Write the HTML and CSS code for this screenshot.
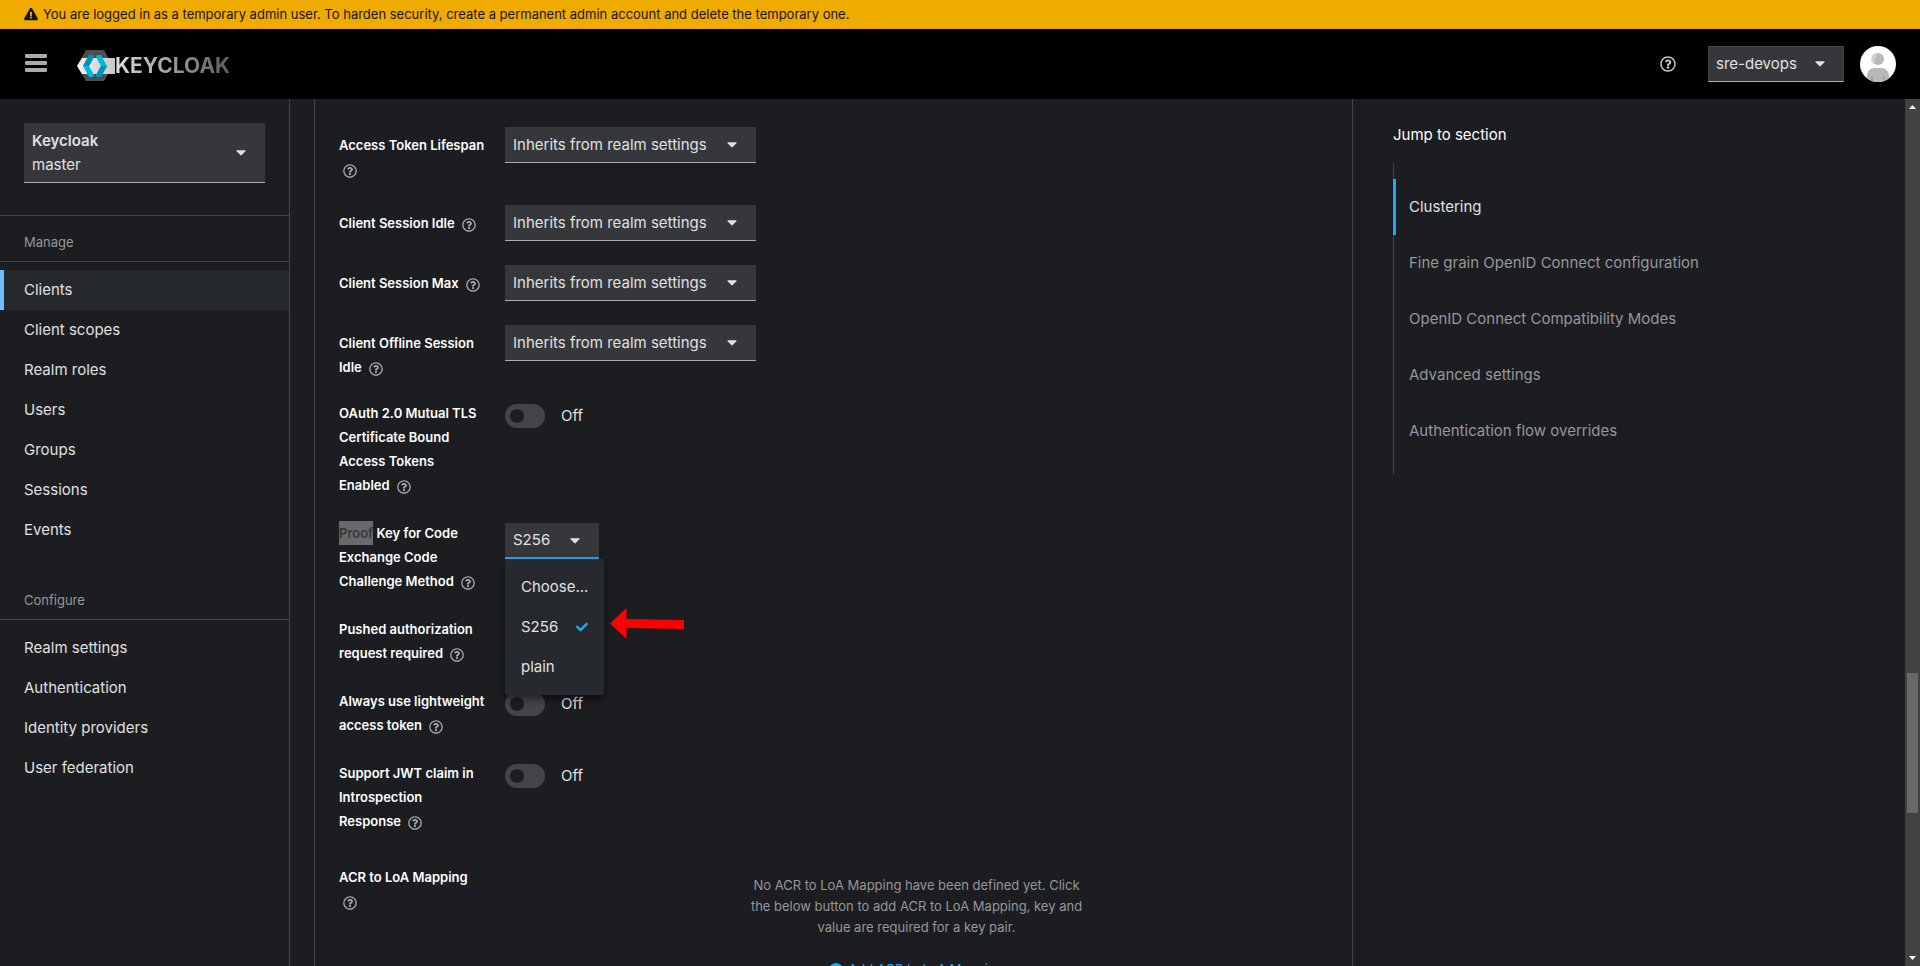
FILE: index.html
```
<!DOCTYPE html>
<html lang="en">
<head>
    <meta charset="UTF-8">
    <meta name="viewport" content="width=device-width, initial-scale=1.0">
    <title>Keycloak Administration Console</title>
    <link rel="stylesheet" href="styles.css">
</head>
<body>

<svg class="sprite" aria-hidden="true">
    <symbol id="caret" viewBox="0 24 320 512"><path d="M31.3 192h257.3c17.8 0 26.7 21.5 14.1 34.1L174.1 354.8c-7.8 7.8-20.5 7.8-28.3 0L17.2 226.1C4.6 213.5 13.5 192 31.3 192z"/></symbol>
    <symbol id="help" viewBox="0 0 512 512"><path d="M256 8C119.043 8 8 119.083 8 256c0 136.997 111.043 248 248 248s248-111.003 248-248C504 119.083 392.957 8 256 8zm0 448c-110.532 0-200-89.431-200-200 0-110.495 89.472-200 200-200 110.491 0 200 89.471 200 200 0 110.53-89.431 200-200 200zm107.244-255.2c0 67.052-72.421 68.084-72.421 92.863V300c0 6.627-5.373 12-12 12h-45.647c-6.627 0-12-5.373-12-12v-8.659c0-35.745 27.1-50.034 47.579-61.516 17.561-9.845 28.324-16.541 28.324-29.579 0-17.246-21.999-28.693-39.784-28.693-23.189 0-33.894 10.977-48.942 29.969-4.057 5.12-11.46 6.071-16.666 2.124l-27.824-21.098c-5.107-3.872-6.251-11.066-2.644-16.363C184.846 131.491 214.94 112 261.794 112c49.071 0 101.45 38.304 101.45 88.8zM298 368c0 23.159-18.841 42-42 42s-42-18.841-42-42 18.841-42 42-42 42 18.841 42 42z"/></symbol>
</svg>

<div class="banner">
    <svg class="banner-icon" viewBox="0 0 576 512"><path d="M569.517 440.013C587.975 472.007 564.806 512 527.94 512H48.054c-36.937 0-59.999-40.055-41.577-71.987L246.423 23.985c18.467-32.009 64.72-31.951 83.154 0l239.94 416.028zM288 354c-25.405 0-46 20.595-46 46s20.595 46 46 46 46-20.595 46-46-20.595-46-46-46zm-43.673-165.346l7.418 136c.347 6.364 5.609 11.346 11.982 11.346h48.546c6.373 0 11.635-4.982 11.982-11.346l7.418-136c.375-6.874-5.098-12.654-11.982-12.654h-63.383c-6.884 0-12.356 5.78-11.981 12.654z"/></svg>
    <span>You are logged in as a temporary admin user. To harden security, create a permanent admin account and delete the temporary one.</span>
</div>

<header class="masthead">
    <button class="nav-toggle" type="button" aria-label="Global navigation"><span></span><span></span><span></span></button>
    <a class="logo" href="#">
        <svg class="logo-mark" viewBox="0 0 38 32" aria-hidden="true">
            <defs>
                <linearGradient id="band"><stop offset="0" stop-color="#f2f2f2"/><stop offset="1" stop-color="#c8c8c8"/></linearGradient>
            </defs>
            <path fill="#4d4d4d" d="M9 0h18l9 16-9 15H9L0 16z"/>
            <path fill="url(#band)" d="M5 8h33v16H5L0 16z"/>
            <path fill="#00b8e3" d="M12 5h4l1 2-5 9 5 9-1 2h-4L6 16z"/>
            <path fill="#0093b8" d="M12 5h4l1 2-5 9H6z"/>
            <path fill="#00b8e3" d="M20 5h4l6 11-6 11h-4l-1-2 5-9-5-9z"/>
            <path fill="#0093b8" d="M24 16h6l-6 11h-4l-1-2z"/>
        </svg>
        <span class="logo-text">KEYCLOAK</span>
    </a>
    <div class="masthead-tools">
        <button class="icon-button" type="button" aria-label="Help"><svg><use href="#help"/></svg></button>
        <button class="user-menu" type="button"><span>sre-devops</span><svg class="caret"><use href="#caret"/></svg></button>
        <svg class="avatar" viewBox="0 0 36 36" role="img" aria-label="User avatar">
            <clipPath id="round"><circle cx="18" cy="18" r="18"/></clipPath>
            <g clip-path="url(#round)">
                <path fill="#fff" d="M0 0h36v36H0z"/>
                <circle cx="18" cy="13" r="6" fill="#b8b8b8"/>
                <path fill="#d0d0d0" d="M18 7a6 6 0 0 0-4 11c1-3 1-7 4-11z"/>
                <path fill="#b8b8b8" d="M7 36v-5c0-6 3-9 8-9h6c5 0 8 3 8 9v5z"/>
                <path fill="#a3a3a3" d="M11 36v-5l2-1v6zM23 36v-6l2 1v5z"/>
            </g>
        </svg>
    </div>
</header>

<div class="page">
    <nav class="sidebar">
        <div class="realm">
            <button class="realm-selector" type="button">
                <span class="realm-text"><b>Keycloak</b><span>master</span></span>
                <svg class="caret"><use href="#caret"/></svg>
            </button>
        </div>
        <section class="nav-group">
            <h2>Manage</h2>
            <ul>
                <li><a class="current" href="#">Clients</a></li>
                <li><a href="#">Client scopes</a></li>
                <li><a href="#">Realm roles</a></li>
                <li><a href="#">Users</a></li>
                <li><a href="#">Groups</a></li>
                <li><a href="#">Sessions</a></li>
                <li><a href="#">Events</a></li>
            </ul>
        </section>
        <section class="nav-group">
            <h2>Configure</h2>
            <ul>
                <li><a href="#">Realm settings</a></li>
                <li><a href="#">Authentication</a></li>
                <li><a href="#">Identity providers</a></li>
                <li><a href="#">User federation</a></li>
            </ul>
        </section>
    </nav>

    <main class="content">
        <form class="panel">
            <div class="field">
                <div class="field-label padded">
                    <label for="token-lifespan">Access Token Lifespan</label>
                    <button class="help" type="button" aria-label="Help"><svg><use href="#help"/></svg></button>
                </div>
                <div class="select">
                    <select id="token-lifespan"><option>Inherits from realm settings</option></select>
                    <svg class="caret"><use href="#caret"/></svg>
                </div>
            </div>
            <div class="field">
                <div class="field-label padded">
                    <label for="session-idle">Client Session Idle</label>
                    <button class="help" type="button" aria-label="Help"><svg><use href="#help"/></svg></button>
                </div>
                <div class="select">
                    <select id="session-idle"><option>Inherits from realm settings</option></select>
                    <svg class="caret"><use href="#caret"/></svg>
                </div>
            </div>
            <div class="field">
                <div class="field-label padded">
                    <label for="session-max">Client Session Max</label>
                    <button class="help" type="button" aria-label="Help"><svg><use href="#help"/></svg></button>
                </div>
                <div class="select">
                    <select id="session-max"><option>Inherits from realm settings</option></select>
                    <svg class="caret"><use href="#caret"/></svg>
                </div>
            </div>
            <div class="field">
                <div class="field-label padded">
                    <label for="offline-idle">Client Offline Session Idle</label>
                    <button class="help" type="button" aria-label="Help"><svg><use href="#help"/></svg></button>
                </div>
                <div class="select">
                    <select id="offline-idle"><option>Inherits from realm settings</option></select>
                    <svg class="caret"><use href="#caret"/></svg>
                </div>
            </div>
            <div class="field">
                <div class="field-label">
                    <label for="mutual-tls">OAuth 2.0 Mutual TLS Certificate Bound Access Tokens Enabled</label>
                    <button class="help" type="button" aria-label="Help"><svg><use href="#help"/></svg></button>
                </div>
                <label class="switch"><input type="checkbox" id="mutual-tls"><span>Off</span></label>
            </div>
            <div class="field">
                <div class="field-label">
                    <label for="pkce-method"><mark>Proof</mark> Key for Code Exchange Code Challenge Method</label>
                    <button class="help" type="button" aria-label="Help"><svg><use href="#help"/></svg></button>
                </div>
                <div class="select open">
                    <select id="pkce-method"><option>Choose...</option><option selected>S256</option><option>plain</option></select>
                    <svg class="caret"><use href="#caret"/></svg>
                    <ul class="menu" role="listbox">
                        <li role="option">Choose...</li>
                        <li role="option" aria-selected="true">S256 <svg class="check" viewBox="0 0 512 512"><path d="M173.898 439.404l-166.4-166.4c-9.997-9.997-9.997-26.206 0-36.204l36.203-36.204c9.997-9.998 26.207-9.998 36.204 0L192 312.69 432.095 72.596c9.997-9.997 26.207-9.997 36.204 0l36.203 36.204c9.997 9.997 9.997 26.206 0 36.204l-294.4 294.401c-9.998 9.997-26.207 9.997-36.204-.001z"/></svg></li>
                        <li role="option">plain</li>
                    </ul>
                    <svg class="pointer" viewBox="0 0 74 32" aria-hidden="true"><path fill="#f00" d="M0 15.500L16.500 0v11L74 12v9l-57.500-1v11z"/></svg>
                </div>
            </div>
            <div class="field">
                <div class="field-label">
                    <label for="pushed-auth">Pushed authorization request required</label>
                    <button class="help" type="button" aria-label="Help"><svg><use href="#help"/></svg></button>
                </div>
                <label class="switch"><input type="checkbox" id="pushed-auth"></label>
            </div>
            <div class="field">
                <div class="field-label">
                    <label for="lightweight">Always use lightweight access token</label>
                    <button class="help" type="button" aria-label="Help"><svg><use href="#help"/></svg></button>
                </div>
                <label class="switch"><input type="checkbox" id="lightweight"><span>Off</span></label>
            </div>
            <div class="field">
                <div class="field-label">
                    <label for="jwt-claim">Support JWT claim in Introspection Response</label>
                    <button class="help" type="button" aria-label="Help"><svg><use href="#help"/></svg></button>
                </div>
                <label class="switch"><input type="checkbox" id="jwt-claim"><span>Off</span></label>
            </div>
            <div class="field">
                <div class="field-label padded">
                    <span>ACR to LoA Mapping</span>
                    <button class="help own-line" type="button" aria-label="Help"><svg><use href="#help"/></svg></button>
                </div>
                <div class="empty-state">
                    <p>No ACR to LoA Mapping have been defined yet. Click the below button to add ACR to LoA Mapping, key and value are required for a key pair.</p>
                    <button class="add-link" type="button">
                        <svg viewBox="0 0 14 14"><circle cx="7" cy="7" r="7"/><path stroke="#1b1d21" stroke-width="2" d="M7 3v8M3 7h8"/></svg>
                        Add ACR to LoA Mapping
                    </button>
                </div>
            </div>
        </form>

        <aside class="jump">
            <h2>Jump to section</h2>
            <ul>
                <li><a class="current" href="#">Clustering</a></li>
                <li><a href="#">Fine grain OpenID Connect configuration</a></li>
                <li><a href="#">OpenID Connect Compatibility Modes</a></li>
                <li><a href="#">Advanced settings</a></li>
                <li><a href="#">Authentication flow overrides</a></li>
            </ul>
        </aside>
    </main>

    <div class="scrollbar" aria-hidden="true">
        <svg viewBox="0 0 15 15"><path fill="#fff" d="M4 10l3.500-4L11 10z"/></svg>
        <div class="thumb"></div>
        <svg viewBox="0 0 15 15"><path fill="#fff" d="M4 5h7L7.500 9z"/></svg>
    </div>
</div>

</body>
</html>
```
FILE: styles.css
```
* {
    box-sizing: border-box;
}

body {
    margin: 0;
    height: 100vh;
    display: flex;
    flex-direction: column;
    overflow: hidden;
    background-color: #1b1d21;
    color: #e0e0e0;
    font-family: Inter, "Liberation Sans", sans-serif;
    font-size: 15px;
    line-height: 24px;
}

h2,
p,
ul {
    margin: 0;
    padding: 0;
    font-weight: normal;
}

ul {
    list-style: none;
}

a {
    color: inherit;
    text-decoration: none;
}

button,
select {
    margin: 0;
    padding: 0;
    border: 0;
    background: none;
    color: inherit;
    font: inherit;
}

svg {
    fill: currentColor;
}

.sprite {
    display: none;
}

.caret {
    flex: none;
    width: 10px;
    height: 16px;
}

/* Top bars */
.banner {
    flex: none;
    display: flex;
    align-items: center;
    gap: 5px;
    height: 29px;
    padding: 0 24px 1px;
    background-color: #f0ab00;
    color: #151515;
    font-size: 13px;
    white-space: nowrap;
}

.banner-icon {
    width: 14px;
    height: 14px;
}

.masthead {
    flex: none;
    display: flex;
    align-items: center;
    height: 70px;
    padding: 0 24px;
    background-color: #000;
}

.nav-toggle {
    display: flex;
    flex-direction: column;
    gap: 3px;
    width: 24px;
    padding: 0 1px 2px;
}

.nav-toggle span {
    height: 4px;
    border-radius: 1px;
    background-color: #aaabac;
}

.logo {
    display: flex;
    align-items: center;
    margin-left: 29px;
    padding-top: 4px;
}

.logo-mark {
    width: 38px;
    height: 32px;
}

.logo-text {
    background: linear-gradient(to right, #dcdcdc, #5c5c5c);
    -webkit-background-clip: text;
    background-clip: text;
    color: transparent;
    font-size: 21px;
    font-weight: 700;
}

.masthead-tools {
    display: flex;
    align-items: center;
    margin-left: auto;
}

.icon-button {
    width: 16px;
    height: 16px;
    margin-right: 32px;
    color: #c6c7c8;
}

.icon-button svg {
    display: block;
    width: 16px;
    height: 16px;
}

.user-menu {
    display: flex;
    align-items: center;
    justify-content: space-between;
    width: 136px;
    height: 36px;
    padding: 0 18px 0 7px;
    border: 1px solid #444548;
    border-bottom-color: #aaabac;
    background-color: #36373a;
}

.avatar {
    width: 36px;
    height: 36px;
    margin-left: 16px;
}

/* Sidebar */
.page {
    flex: 1;
    display: flex;
    min-height: 0;
}

.sidebar {
    flex: none;
    width: 290px;
    border-right: 1px solid #444548;
}

.realm {
    padding: 24px 24px 32px;
    border-bottom: 1px solid #444548;
}

.realm-selector {
    display: flex;
    align-items: center;
    justify-content: space-between;
    width: 100%;
    height: 60px;
    padding: 0 19px 0 8px;
    border-bottom: 1px solid #aaabac;
    background-color: #36373a;
    text-align: left;
}

.realm-text {
    display: flex;
    flex-direction: column;
}

.realm-text b {
    font-weight: 600;
}

.nav-group h2 {
    padding: 14px 24px 7px;
    border-bottom: 1px solid #444548;
    color: #969799;
    font-size: 13px;
}

.nav-group ul {
    padding: 8px 0 24px;
}

.nav-group a {
    display: block;
    padding: 8px 24px;
}

.nav-group a.current {
    background-color: #26292d;
    box-shadow: inset 4px 0 #73bcf7;
}

/* Form */
.content {
    flex: 1;
    display: grid;
    grid-template-columns: 1fr 528px;
    min-width: 0;
    padding: 0 24px;
    overflow: hidden;
}

.panel {
    display: flex;
    flex-direction: column;
    gap: 24px;
    padding: 28px 24px 0;
    border: 1px solid #444548;
    border-width: 0 1px;
}

.field {
    display: grid;
    grid-template-columns: 146px 1fr;
    column-gap: 20px;
    align-items: start;
}

.field-label {
    margin: -2px 0 2px;
    color: #fff;
    font-size: 13px;
    font-weight: 600;
}

.field-label.padded {
    margin: 0;
    padding-top: 6px;
}

mark {
    display: inline-block;
    background-color: #68696b;
    color: #36373a;
}

.help {
    height: 14px;
    padding: 0 4px;
    vertical-align: -4px;
    line-height: 14px;
    color: #aaabac;
}

.help svg {
    display: block;
    width: 14px;
    height: 14px;
}

.select {
    position: relative;
    width: 251px;
}

.select select {
    display: block;
    appearance: none;
    width: 100%;
    height: 36px;
    padding: 0 30px 0 8px;
    border-bottom: 1px solid #aaabac;
    border-radius: 0;
    background-color: #36373a;
}

.select .caret {
    position: absolute;
    top: 10px;
    right: 19px;
    pointer-events: none;
}

.select.open {
    width: 94px;
}

.select.open select {
    border-bottom: 2px solid #1fa7f8;
}

.menu {
    position: absolute;
    top: 36px;
    left: 0;
    z-index: 1;
    padding: 8px 0;
    background-color: #26292d;
    box-shadow: 0 4px 8px rgba(0, 0, 0, 0.5);
}

.menu li {
    display: flex;
    align-items: center;
    justify-content: space-between;
    padding: 8px 16px;
}

.menu .check {
    width: 12px;
    height: 12px;
    fill: #1fa7f8;
}

.pointer {
    position: absolute;
    top: 85px;
    left: 105px;
    width: 74px;
    height: 32px;
}

.switch {
    display: flex;
    align-items: center;
    gap: 16px;
    padding-top: 1px;
}

.switch input {
    appearance: none;
    width: 40px;
    height: 24px;
    margin: 0;
    padding: 5px;
    border-radius: 12px;
    background-color: #444548;
}

.switch input::before {
    content: "";
    display: block;
    width: 14px;
    height: 14px;
    border-radius: 50%;
    background-color: #1b1d21;
}

.empty-state {
    display: flex;
    flex-direction: column;
    align-items: center;
    gap: 21px;
    padding-top: 16px;
    color: #969799;
    font-size: 13px;
    line-height: 21px;
    text-align: center;
}

.empty-state p {
    max-width: 345px;
}

.add-link {
    display: flex;
    align-items: center;
    gap: 5px;
    color: #1fa7f8;
}

.add-link svg {
    width: 14px;
    height: 14px;
}

/* Jump links */
.jump {
    padding: 24px 0 0 40px;
}

.jump h2 {
    color: #fff;
    font-size: 15px;
}

.jump ul {
    margin-top: 16px;
    padding: 16px 0;
    border-left: 1px solid #444548;
}

.jump a {
    display: block;
    margin-left: -1px;
    padding: 16px;
    color: #969799;
}

.jump a.current {
    box-shadow: inset 3px 0 #1fa7f8;
    color: #e0e0e0;
}

.scrollbar {
    flex: none;
    display: grid;
    grid-template-rows: 15px 559fr 140fr 138fr 15px;
    width: 15px;
    background-color: #424242;
}

.scrollbar .thumb {
    grid-row: 3;
    margin: 0 2px;
    background-color: #686868;
}

.scrollbar svg:last-child {
    grid-row: 5;
}
```
